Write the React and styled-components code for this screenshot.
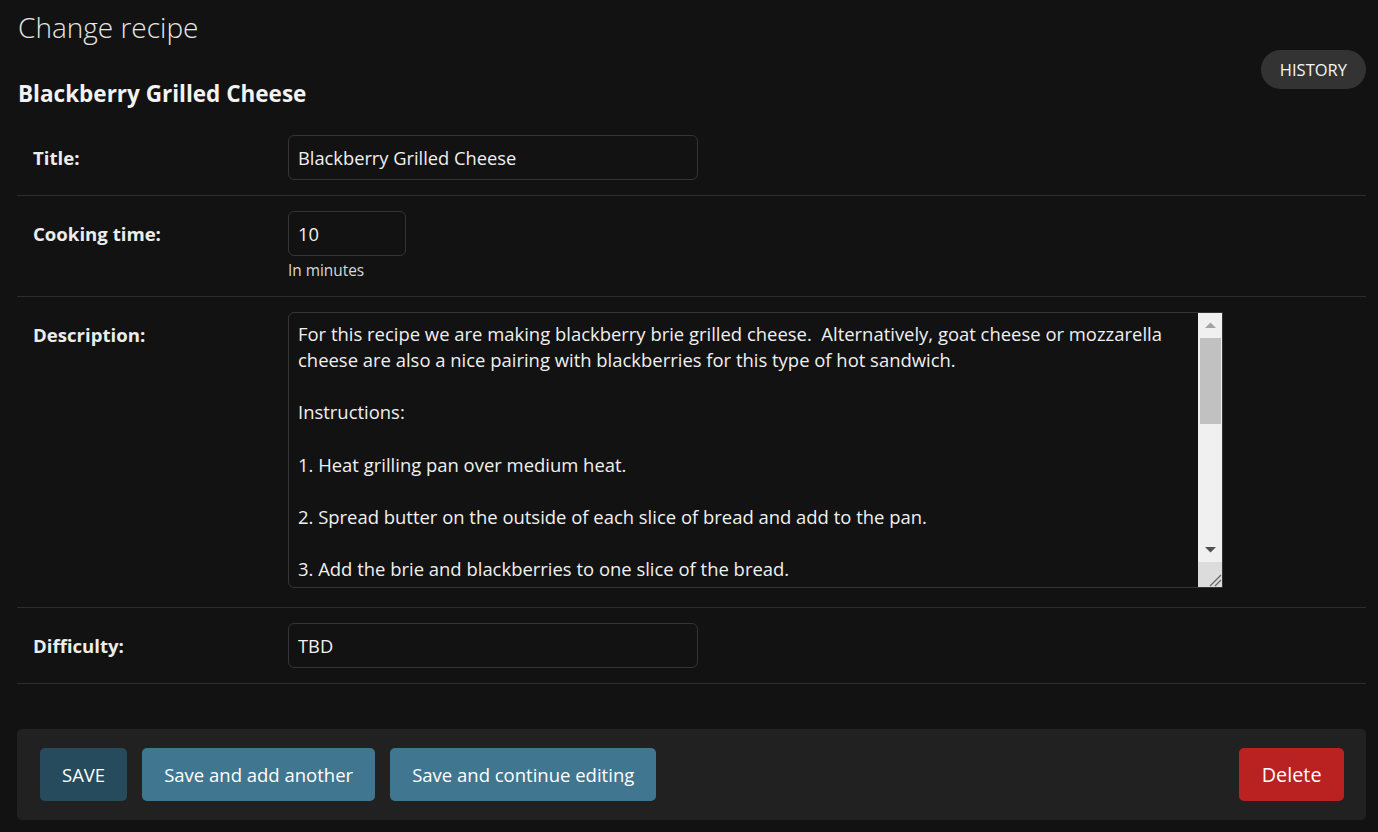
import React from 'react';
import styled, { createGlobalStyle } from 'styled-components';

const FONT = `"Open Sans", "Noto Sans", sans-serif`;

const Global = createGlobalStyle`
  html, body { margin: 0; padding: 0; background: #121212; }
  body { font-family: ${FONT}; color: #eeeeee; }
  * { box-sizing: border-box; }
`;

const Page = styled.div`
  padding: 7px 12px 12px 17px;
  min-height: 832px;
`;

const PageTitle = styled.h1`
  margin: 0 0 0 1px;
  font-size: 28px;
  line-height: 40px;
  font-weight: 300;
  color: #e6e6e6;
`;

const ToolsRow = styled.div`
  display: flex;
  align-items: flex-start;
  justify-content: space-between;
  margin-top: 3px;
`;

const ObjectTitle = styled.h2`
  margin: 29px 0 0 1px;
  font-size: 22.5px;
  line-height: 30px;
  font-weight: 700;
  color: #f2f2f2;
`;

const HistoryLink = styled.a`
  display: flex;
  align-items: center;
  height: 39px;
  padding: 0 19px;
  border-radius: 20px;
  background: #333333;
  color: #f5f5f5;
  font-size: 16.5px;
  text-transform: uppercase;
  text-decoration: none;
`;

const Fieldset = styled.div`
  margin-top: 11px;
`;

const Row = styled.div`
  display: flex;
  align-items: flex-start;
  padding: 15px 0 ${(p) => p.$pb || 15}px 16px;
  border-bottom: 1px solid #2c2c2c;
`;

const Label = styled.label`
  flex: none;
  width: 255px;
  padding-top: 10px;
  font-size: 18.6px;
  line-height: 26px;
  font-weight: 700;
  color: #ececec;
`;

const Field = styled.div`
  display: flex;
  flex-direction: column;
`;

const TextInput = styled.input`
  width: ${(p) => p.$w}px;
  height: 45px;
  padding: 0 9px;
  border: 1px solid #353535;
  border-radius: 6px;
  background: #121212;
  color: #f0f0f0;
  font-family: ${FONT};
  font-size: 18.3px;
  outline: none;
`;

const Help = styled.div`
  margin-top: 5px;
  font-size: 15.4px;
  line-height: 20px;
  color: #d8d8d8;
`;

const AreaBox = styled.div`
  display: flex;
  width: 935px;
  height: 276px;
  border: 1px solid #353535;
  border-radius: 6px 1px 1px 6px;
  background: #121212;
  overflow: hidden;
`;

const Area = styled.textarea`
  flex: 1;
  border: none;
  resize: none;
  overflow: hidden;
  padding: 7.5px 9px;
  background: transparent;
  color: #f0f0f0;
  font-family: ${FONT};
  font-size: 18.45px;
  line-height: 26.2px;
  outline: none;
  white-space: pre;
`;

const ScrollBar = styled.div`
  flex: none;
  width: 24px;
  display: flex;
  flex-direction: column;
  background: #f0f0f0;
`;

const ScrollBtn = styled.div`
  height: 25px;
  display: flex;
  align-items: center;
  justify-content: center;
`;

const Thumb = styled.div`
  height: 86px;
  margin: 0 1px 0 2px;
  background: #c1c1c1;
`;

const Track = styled.div`
  flex: 1;
`;

const Corner = styled.div`
  height: 25px;
  background: #dcdcdc;
  display: flex;
  align-items: flex-end;
  justify-content: flex-end;
`;

const SubmitRow = styled.div`
  display: flex;
  align-items: center;
  gap: 15px;
  margin-top: 45px;
  padding: 19px 22px 19px 23px;
  background: #212121;
  border-radius: 5px;
`;

const Button = styled.button`
  height: 53px;
  padding: 0 ${(p) => (p.$right ? 22.5 : 22)}px;
  border: none;
  border-radius: 5px;
  background: ${(p) => p.$bg};
  color: #ffffff;
  font-family: ${FONT};
  font-size: ${(p) => (p.$right ? 19.8 : 18.5)}px;
  text-transform: ${(p) => (p.$upper ? 'uppercase' : 'none')};
  margin-left: ${(p) => (p.$right ? 'auto' : '0')};
  cursor: pointer;
`;

const DESCRIPTION =
  'For this recipe we are making blackberry brie grilled cheese.  Alternatively, goat cheese or mozzarella\n' +
  'cheese are also a nice pairing with blackberries for this type of hot sandwich.\n\n' +
  'Instructions:\n\n' +
  '1. Heat grilling pan over medium heat.\n\n' +
  '2. Spread butter on the outside of each slice of bread and add to the pan.\n\n' +
  '3. Add the brie and blackberries to one slice of the bread.\n\n' +
  '4. Top with the other slice of bread and cook until golden.';

export default function App() {
  return (
    <>
      <Global />
      <Page>
        <PageTitle>Change recipe</PageTitle>
        <ToolsRow>
          <ObjectTitle>Blackberry Grilled Cheese</ObjectTitle>
          <HistoryLink href="#">History</HistoryLink>
        </ToolsRow>
        <Fieldset>
          <Row>
            <Label>Title:</Label>
            <TextInput $w={410} defaultValue="Blackberry Grilled Cheese" />
          </Row>
          <Row>
            <Label>Cooking time:</Label>
            <Field>
              <TextInput $w={118} defaultValue="10" />
              <Help>In minutes</Help>
            </Field>
          </Row>
          <Row $pb={19}>
            <Label>Description:</Label>
            <AreaBox>
              <Area wrap="off" defaultValue={DESCRIPTION} />
              <ScrollBar>
                <ScrollBtn>
                  <svg width="11" height="7" viewBox="0 0 11 7">
                    <path d="M0 6 L5.5 0.5 L11 6 Z" fill="#a3a3a3" />
                  </svg>
                </ScrollBtn>
                <Thumb />
                <Track />
                <ScrollBtn>
                  <svg width="11" height="7" viewBox="0 0 11 7">
                    <path d="M0 1 L5.5 6.5 L11 1 Z" fill="#505050" />
                  </svg>
                </ScrollBtn>
                <Corner>
                  <svg width="14" height="14" viewBox="0 0 14 14">
                    <path d="M2 13 L13 2 M7 13 L13 7" stroke="#6a6a6a" strokeWidth="1.4" />
                  </svg>
                </Corner>
              </ScrollBar>
            </AreaBox>
          </Row>
          <Row>
            <Label>Difficulty:</Label>
            <TextInput $w={410} defaultValue="TBD" />
          </Row>
        </Fieldset>
        <SubmitRow>
          <Button $bg="#264b5d" $upper>Save</Button>
          <Button $bg="#417690">Save and add another</Button>
          <Button $bg="#417690">Save and continue editing</Button>
          <Button $bg="#ba2121" $right>Delete</Button>
        </SubmitRow>
      </Page>
    </>
  );
}
